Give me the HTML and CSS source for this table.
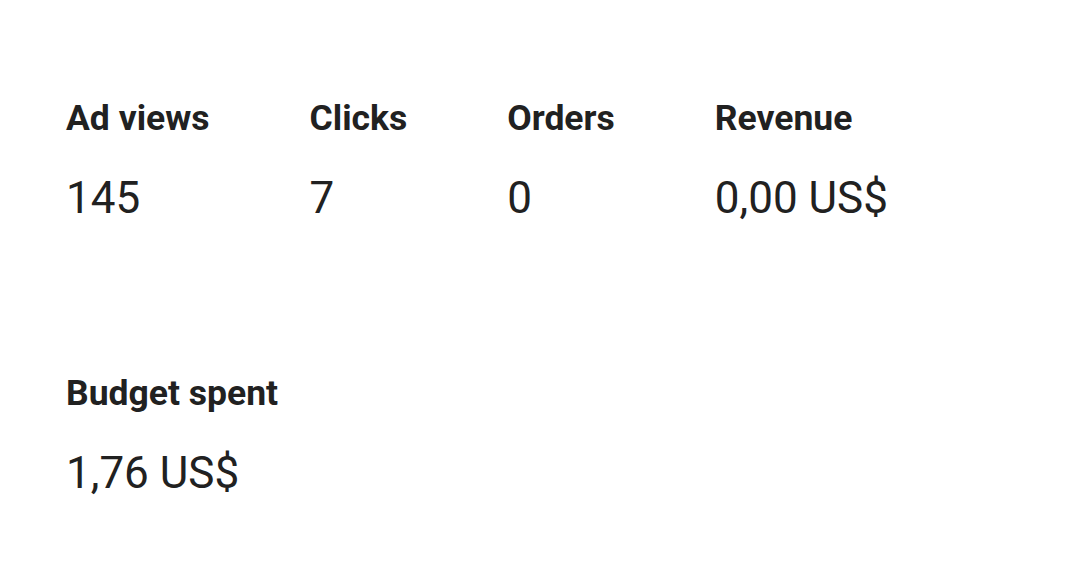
FILE: index.html
```html
<!DOCTYPE html>
<html>
<head>
<meta charset="utf-8">
<link rel="stylesheet" href="styles.css">
</head>
<body>
<div class="page">
  <div class="row">
    <div class="stat"><div class="label">Ad views</div><div class="value">145</div></div>
    <div class="stat"><div class="label">Clicks</div><div class="value">7</div></div>
    <div class="stat"><div class="label">Orders</div><div class="value">0</div></div>
    <div class="stat"><div class="label">Revenue</div><div class="value">0,00 US$</div></div>
  </div>
  <div class="row second">
    <div class="stat"><div class="label">Budget spent</div><div class="value">1,76 US$</div></div>
  </div>
</div>
</body>
</html>
```
FILE: styles.css
```css
html, body { margin: 0; padding: 0; background: #fff; }
body { font-family: Roboto, "Noto Sans", sans-serif; color: #212121; }
.page { padding: 96px 66px 0; }
.row { display: flex; gap: 100px; }
.row.second { margin-top: 147px; }
.stat { display: flex; flex-direction: column; }
.label { font-weight: 700; font-size: 35.5px; line-height: 44px; }
.value { font-size: 44px; line-height: 52px; margin-top: 32px; }
```
